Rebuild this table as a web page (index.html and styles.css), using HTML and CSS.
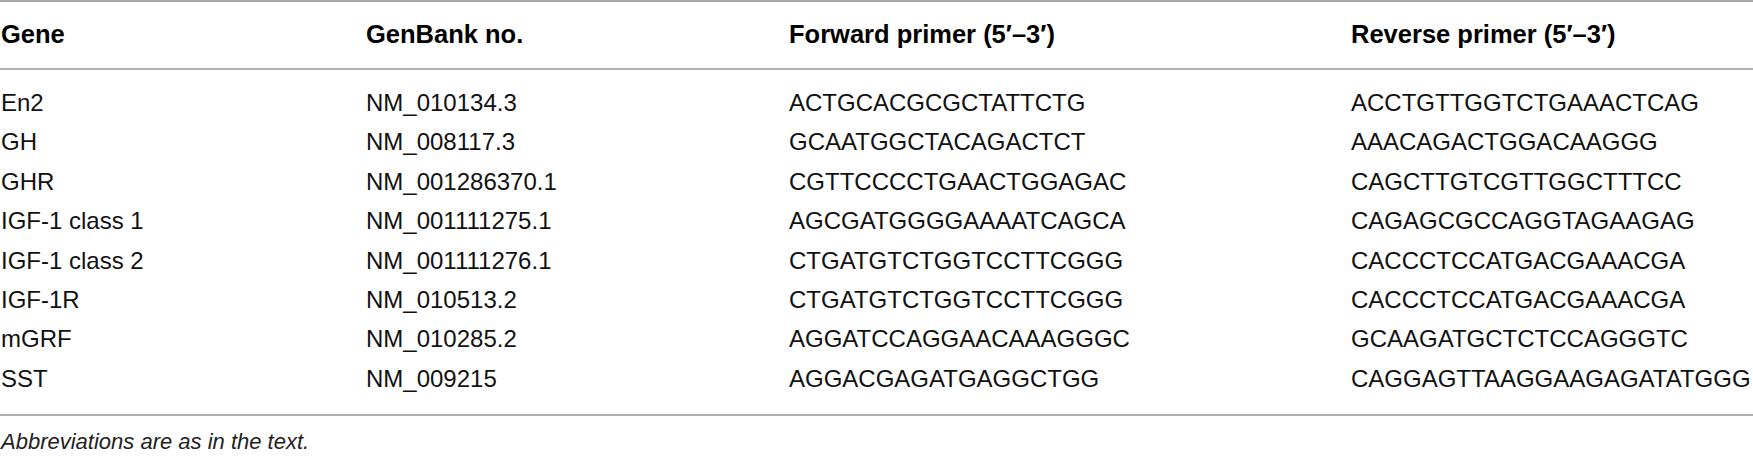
FILE: index.html
```html
<!DOCTYPE html>
<html>
<head>
<meta charset="utf-8">
<link rel="stylesheet" href="styles.css">
</head>
<body>
<div class="wrap">
<table class="primers">
<colgroup>
<col class="c1"><col class="c2"><col class="c3"><col class="c4">
</colgroup>
<thead>
<tr><th>Gene</th><th>GenBank no.</th><th>Forward primer (5′–3′)</th><th>Reverse primer (5′–3′)</th></tr>
</thead>
<tbody>
<tr><td>En2</td><td>NM_010134.3</td><td>ACTGCACGCGCTATTCTG</td><td>ACCTGTTGGTCTGAAACTCAG</td></tr>
<tr><td>GH</td><td>NM_008117.3</td><td>GCAATGGCTACAGACTCT</td><td>AAACAGACTGGACAAGGG</td></tr>
<tr><td>GHR</td><td>NM_001286370.1</td><td>CGTTCCCCTGAACTGGAGAC</td><td>CAGCTTGTCGTTGGCTTTCC</td></tr>
<tr><td>IGF-1 class 1</td><td>NM_001111275.1</td><td>AGCGATGGGGAAAATCAGCA</td><td>CAGAGCGCCAGGTAGAAGAG</td></tr>
<tr><td>IGF-1 class 2</td><td>NM_001111276.1</td><td>CTGATGTCTGGTCCTTCGGG</td><td>CACCCTCCATGACGAAACGA</td></tr>
<tr><td>IGF-1R</td><td>NM_010513.2</td><td>CTGATGTCTGGTCCTTCGGG</td><td>CACCCTCCATGACGAAACGA</td></tr>
<tr><td>mGRF</td><td>NM_010285.2</td><td>AGGATCCAGGAACAAAGGGC</td><td>GCAAGATGCTCTCCAGGGTC</td></tr>
<tr><td>SST</td><td>NM_009215</td><td>AGGACGAGATGAGGCTGG</td><td>CAGGAGTTAAGGAAGAGATATGGG</td></tr>
</tbody>
</table>
<p class="note">Abbreviations are as in the text.</p>
</div>
</body>
</html>
```
FILE: styles.css
```css
html, body {
  margin: 0;
  padding: 0;
  background: #ffffff;
}
.wrap {
  width: 1753px;
  font-family: "Liberation Sans", Arial, sans-serif;
  color: #111111;
}
.primers {
  width: 100%;
  border-collapse: collapse;
  table-layout: fixed;
  border-top: 2px solid #a8a8a8;
}
.c1 { width: 365px; }
.c2 { width: 423px; }
.c3 { width: 562px; }
.c4 { width: auto; }
.primers th {
  text-align: left;
  font-weight: bold;
  font-size: 25.5px;
  line-height: 28px;
  padding: 18px 0 20px 1px;
  color: #000;
  white-space: nowrap;
  border-bottom: 2px solid #b0b0b0;
}
.primers td {
  font-size: 24px;
  line-height: 39.4px;
  padding: 0 0 0 1px;
  white-space: nowrap;
  overflow: visible;
}
.primers tbody tr:first-child td { padding-top: 13px; }
.primers tbody tr:last-child td {
  padding-bottom: 16px;
  border-bottom: 2px solid #b0b0b0;
}
.note {
  margin: 13px 0 0 1px;
  font-size: 22px;
  line-height: 26px;
  font-style: italic;
  color: #222;
}
```
